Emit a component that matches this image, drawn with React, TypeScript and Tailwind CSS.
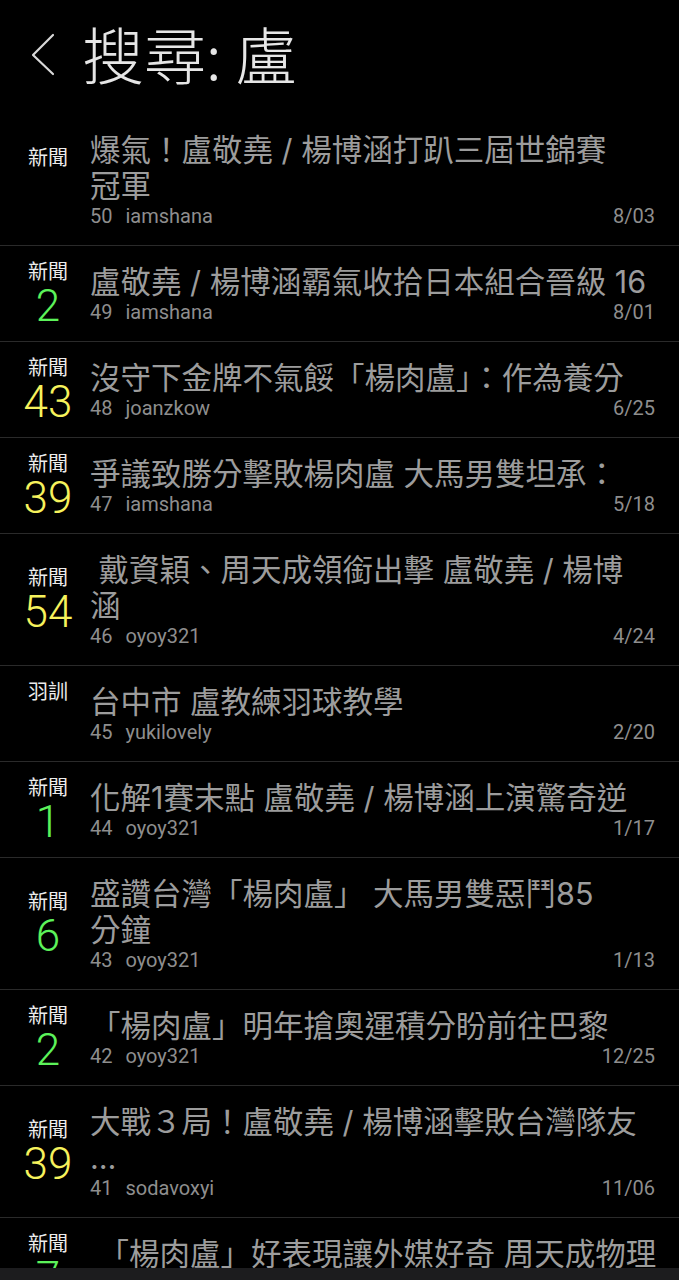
import React from "react";

type Item = {
  tag: string;
  count?: string;
  color?: "g" | "y";
  lines: string[];
  num: string;
  author: string;
  date: string;
};

const items: Item[] = [
  { tag: "新聞", lines: ["爆氣！盧敬堯 / 楊博涵打趴三屆世錦賽", "冠軍"], num: "50", author: "iamshana", date: "8/03" },
  { tag: "新聞", count: "2", color: "g", lines: ["盧敬堯 / 楊博涵霸氣收拾日本組合晉級 16"], num: "49", author: "iamshana", date: "8/01" },
  { tag: "新聞", count: "43", color: "y", lines: ["沒守下金牌不氣餒「楊肉盧」：作為養分"], num: "48", author: "joanzkow", date: "6/25" },
  { tag: "新聞", count: "39", color: "y", lines: ["爭議致勝分擊敗楊肉盧 大馬男雙坦承："], num: "47", author: "iamshana", date: "5/18" },
  { tag: "新聞", count: "54", color: "y", lines: ["\u00a0戴資穎、周天成領銜出擊 盧敬堯 / 楊博", "涵"], num: "46", author: "oyoy321", date: "4/24" },
  { tag: "羽訓", lines: ["台中市 盧教練羽球教學"], num: "45", author: "yukilovely", date: "2/20" },
  { tag: "新聞", count: "1", color: "g", lines: ["化解1賽末點 盧敬堯 / 楊博涵上演驚奇逆"], num: "44", author: "oyoy321", date: "1/17" },
  { tag: "新聞", count: "6", color: "g", lines: ["盛讚台灣「楊肉盧」 大馬男雙惡鬥85", "分鐘"], num: "43", author: "oyoy321", date: "1/13" },
  { tag: "新聞", count: "2", color: "g", lines: ["「楊肉盧」明年搶奧運積分盼前往巴黎"], num: "42", author: "oyoy321", date: "12/25" },
  { tag: "新聞", count: "39", color: "y", lines: ["大戰３局！盧敬堯 / 楊博涵擊敗台灣隊友", "…"], num: "41", author: "sodavoxyi", date: "11/06" },
  { tag: "新聞", count: "7", color: "g", lines: ["\u00a0「楊肉盧」好表現讓外媒好奇 周天成物理"], num: "40", author: "oyoy321", date: "11/01" },
];

const CJK = { fontFamily: "Inter, 'Noto Sans CJK TC', sans-serif" };
const NUM = { fontFamily: "Roboto, 'Liberation Sans', sans-serif" };

function Row({ it }: { it: Item }) {
  return (
    <div className="flex items-center border-b border-[#2a2a2a]">
      <div className="ml-[20px] flex w-[56px] shrink-0 flex-col items-center">
        <div className="h-[24px] text-[20px] leading-[24px] text-[#ececec]" style={CJK}>
          {it.tag}
        </div>
        <div
          className={
            "h-[44px] text-[44px] leading-[44px] font-light " +
            (it.color === "g" ? "text-[#5cf25a]" : "text-[#f6f25c]")
          }
          style={NUM}
        >
          {it.count ?? ""}
        </div>
      </div>
      <div className="ml-[14px] mr-[24px] flex min-w-0 flex-1 flex-col pt-[18px] pb-[17px]">
        {it.lines.map((l, i) => (
          <div key={i} className="h-[36px] whitespace-nowrap text-[30.5px] leading-[36px] text-[#9c9c9c]" style={CJK}>
            {l}
          </div>
        ))}
        <div className="flex h-[24px] items-center text-[20px] leading-[24px] text-[#8e8e8e]" style={NUM}>
          <span>{it.num}</span>
          <span className="ml-[13px]">{it.author}</span>
          <span className="ml-auto">{it.date}</span>
        </div>
      </div>
    </div>
  );
}

export default function App() {
  return (
    <div className="relative h-[1280px] w-full overflow-hidden bg-black">
      <div className="flex h-[114px] items-start pl-[30px]">
        <svg className="mt-[33px] h-[44px] w-[26px]" viewBox="0 0 26 44" fill="none">
          <polyline points="23,2 3,22 23,41" stroke="#d8d8d8" strokeWidth="2.2" strokeLinecap="round" strokeLinejoin="round" />
        </svg>
        <div className="ml-[26px] mt-[22px] text-[62px] leading-[62px] font-light text-[#e6e6e6]" style={{ fontFamily: "'Noto Sans CJK TC', sans-serif" }}>
          搜尋: 盧
        </div>
      </div>
      <div className="flex flex-col">
        {items.map((it, i) => (
          <Row key={i} it={it} />
        ))}
      </div>
      <div className="fixed bottom-0 left-0 h-[12px] w-full bg-[#1c1c1e]" />
    </div>
  );
}
